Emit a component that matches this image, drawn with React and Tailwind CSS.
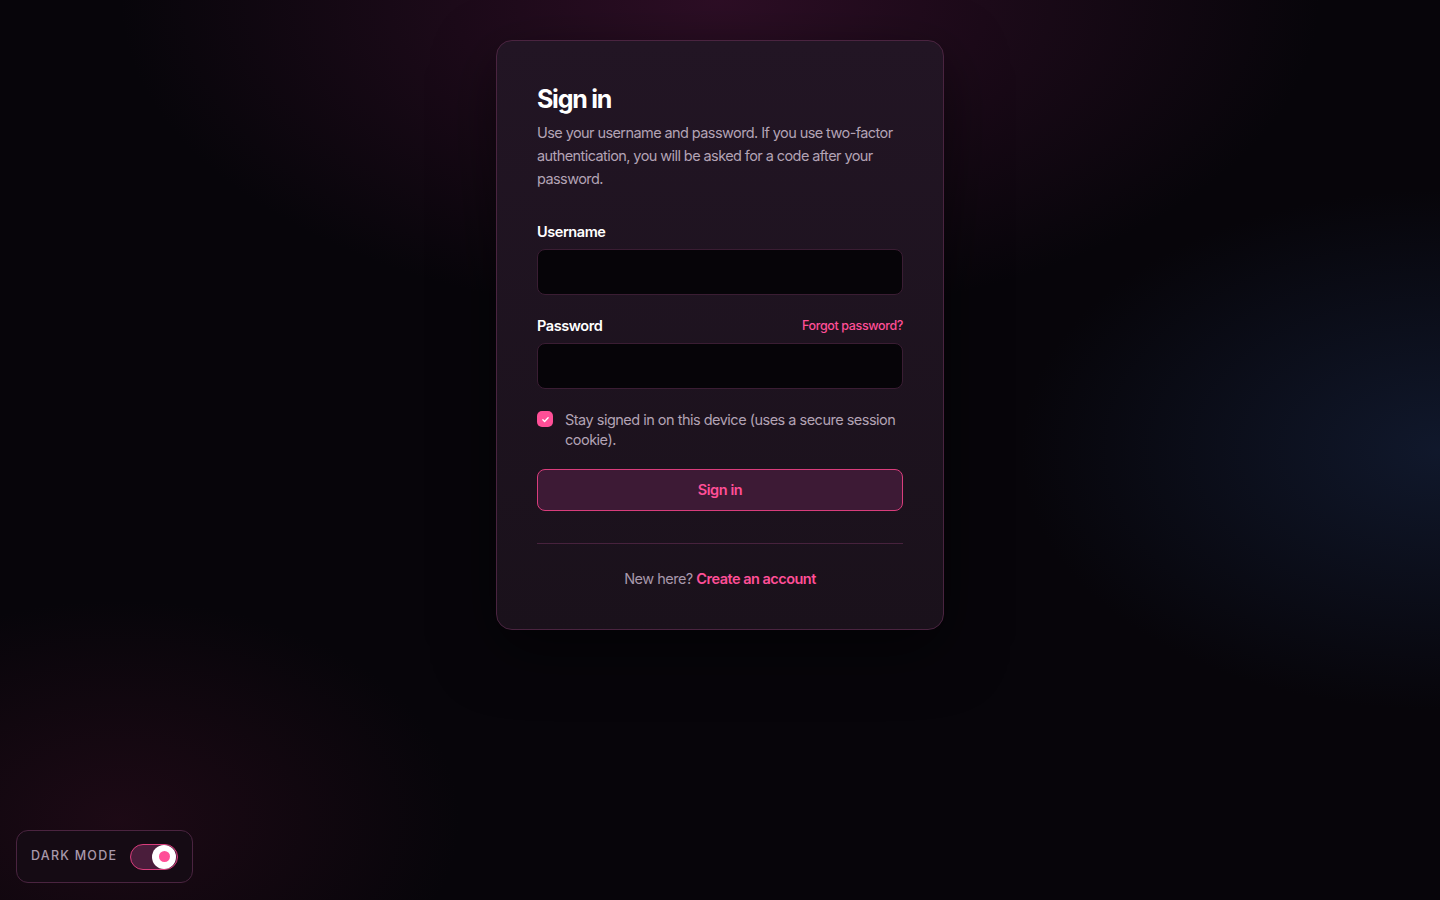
import React, { useState } from "react";

export default function App() {
  const [stay, setStay] = useState(true);
  const [dark, setDark] = useState(true);
  return (
    <div
      className="relative min-h-[900px] w-full overflow-hidden bg-[#07050a] text-white"
      style={{ fontFamily: "Inter, 'Noto Sans', sans-serif" }}
    >
      <div className="pointer-events-none absolute inset-0 bg-[radial-gradient(ellipse_600px_320px_at_720px_0px,rgba(70,20,55,0.6),transparent)]" />
      <div className="pointer-events-none absolute inset-0 bg-[radial-gradient(ellipse_420px_260px_at_1440px_450px,rgba(20,32,58,0.7),transparent)]" />
      <div className="pointer-events-none absolute inset-0 bg-[radial-gradient(ellipse_340px_220px_at_120px_820px,rgba(50,14,32,0.5),transparent)]" />

      <div className="relative flex justify-center pt-10">
        <div className="w-[448px] rounded-2xl border border-[#4a2440] bg-gradient-to-b from-[#221524] to-[#1a111b] px-10 pt-[42px] pb-[40px] shadow-[0_20px_60px_rgba(0,0,0,0.5)]">
          <h1 className="text-[25px] font-bold leading-[32px] tracking-[-0.05em] text-white">Sign in</h1>
          <p className="mt-[6px] text-[14.5px] leading-[23px] tracking-[-0.04em] text-[#b3a3b5]">
            Use your username and password. If you use two-factor authentication, you will be asked for a code after your password.
          </p>

          <label className="mt-[32px] block text-[14.5px] font-semibold leading-[20px] tracking-[-0.03em] text-white">Username</label>
          <input className="mt-[7px] block h-[46px] w-full rounded-lg border border-[#3a1d33] bg-[#060408] px-3 text-[15px] text-white outline-none" />

          <div className="mt-[21px] flex items-center justify-between">
            <label className="text-[14.5px] font-semibold leading-[20px] tracking-[-0.03em] text-white">Password</label>
            <a className="text-[12.5px] font-medium tracking-[-0.03em] text-[#ff4f97]">Forgot password?</a>
          </div>
          <input type="password" className="mt-[7px] block h-[46px] w-full rounded-lg border border-[#3a1d33] bg-[#060408] px-3 text-[15px] text-white outline-none" />

          <div className="mt-[21px] flex items-start gap-3" onClick={() => setStay(!stay)}>
            <span className={"mt-[1px] flex h-4 w-4 shrink-0 items-center justify-center rounded-[5px] " + (stay ? "bg-[#ff4f97]" : "border border-[#5a3050]")}>
              {stay && (
                <svg width="9" height="9" viewBox="0 0 12 12" fill="none">
                  <path d="M2.5 6.3l2.3 2.3L9.5 3.6" stroke="white" strokeWidth="1.8" strokeLinecap="round" strokeLinejoin="round" />
                </svg>
              )}
            </span>
            <span className="text-[14.5px] leading-[20px] tracking-[-0.035em] text-[#b3a3b5]">
              Stay signed in on this device (uses a secure session cookie).
            </span>
          </div>

          <button className="mt-[19px] flex h-[42px] w-full items-center justify-center rounded-lg border border-[#d93d7c] bg-[#3d1a35] text-[14.5px] font-semibold tracking-[-0.03em] text-[#ff4f97]">
            Sign in
          </button>

          <div className="mt-[32px] h-px w-full bg-[#47223d]" />

          <p className="mt-[25px] text-center text-[14.5px] leading-[20px] tracking-[-0.035em] text-[#a898ab]">
            New here? <a className="font-semibold text-[#ff4f97]">Create an account</a>
          </p>
        </div>
      </div>

      <div className="absolute bottom-[17px] left-4 flex h-[53px] w-[177px] items-center gap-[13px] rounded-xl border border-[#4a2440] bg-[#150b14] pl-[14px]">
        <span className="text-[12.5px] font-medium tracking-[0.1em] text-[#a898ab]">DARK MODE</span>
        <button
          onClick={() => setDark(!dark)}
          className="relative flex h-[26px] w-[48px] items-center rounded-full border border-[#d93d7c] bg-[#4a1d3b]"
        >
          <span className="absolute right-[1px] flex h-[24px] w-[24px] items-center justify-center rounded-full bg-white">
            <span className="h-[11px] w-[11px] rounded-full bg-[#ff4f97]" />
          </span>
        </button>
      </div>
    </div>
  );
}
